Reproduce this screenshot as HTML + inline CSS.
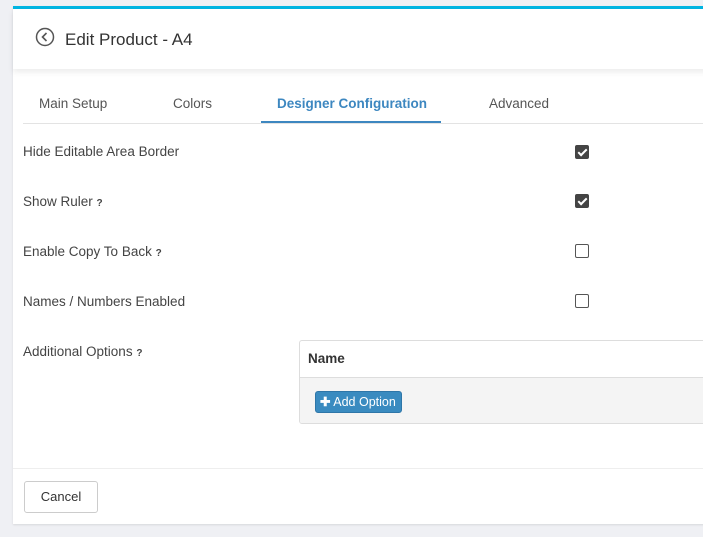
<!DOCTYPE html><html><head><style>
body{margin:0;width:703px;height:537px;background:#eff0f4;font-family:"Liberation Sans",sans-serif;color:#444;position:relative;overflow:hidden}
.panel{position:absolute;left:13px;top:6px;width:700px;height:515px;background:#fff;border-top:3px solid #00b5e2;box-shadow:0 1px 2px rgba(0,0,0,.1)}
.hdr{position:absolute;left:0;top:0;width:700px;height:60px;background:#fff;box-shadow:0 3px 6px rgba(0,0,0,.08)}
.hdr span{position:absolute;left:52px;top:21px;font-size:17px;color:#333}
.tabs{position:absolute;left:10px;top:78px;width:690px;height:36px;border-bottom:1px solid #e3e3e3}
.tab{position:absolute;top:9px;font-size:13.5px;color:#555}
.act{color:#3d87c0;font-weight:bold}
.ul{position:absolute;left:238px;top:34px;width:180px;height:2px;background:#3d87c0}
.lbl{position:absolute;left:10px;font-size:13.5px;color:#444}
.q{font-size:10px;font-weight:bold}
.cb{position:absolute;left:562px;width:12px;height:12px;border:1px solid #555;border-radius:2px;background:#fff}
.cb.on{background:#444;border-color:#444}
.cb.on:after{content:"";position:absolute;left:3.5px;top:0.5px;width:3px;height:7px;border:solid #fff;border-width:0 2px 2px 0;transform:rotate(45deg)}
.tbl{position:absolute;left:286px;top:331px;width:420px;height:82px;border:1px solid #ddd;border-radius:3px;overflow:hidden}
.th{height:37px;border-bottom:1px solid #ddd;font-weight:bold;font-size:13.5px;padding:10px 0 0 8px;box-sizing:border-box;color:#333}
.tb{background:#f4f4f4;height:45px;position:relative}
.btn{position:absolute;left:15px;top:13px;width:87px;height:22px;background:#3a8bc0;border:1px solid #2e76a8;border-radius:3px;color:#fff;font-size:12.5px;line-height:21px;box-sizing:border-box;padding-left:4px}
.foot{position:absolute;left:0;top:459px;width:700px;border-top:1px solid #eee}
.cancel{position:absolute;left:11px;top:472px;width:74px;height:32px;border:1px solid #ccc;border-radius:3px;font-size:13px;line-height:30px;text-align:center;color:#333;box-sizing:border-box}
</style></head><body>
<div class="panel">
<div class="hdr"><svg style="position:absolute;left:22px;top:18px" width="20" height="20" viewBox="0 0 20 20"><circle cx="10" cy="10" r="8.5" fill="none" stroke="#555" stroke-width="1.5"/><path d="M11.5 6 L7.5 10 L11.5 14" fill="none" stroke="#555" stroke-width="1.6"/></svg><span>Edit Product - A4</span></div>
<div class="tabs"><div class="tab" style="left:16px">Main Setup</div><div class="tab" style="left:150px">Colors</div><div class="tab act" style="left:254px">Designer Configuration</div><div class="tab" style="left:466px">Advanced</div><div class="ul"></div></div>
<div class="lbl" style="top:135px">Hide Editable Area Border</div><div class="cb on" style="top:136px"></div>
<div class="lbl" style="top:185px">Show Ruler <span class="q">?</span></div><div class="cb on" style="top:185px"></div>
<div class="lbl" style="top:235px">Enable Copy To Back <span class="q">?</span></div><div class="cb" style="top:235px"></div>
<div class="lbl" style="top:285px">Names / Numbers Enabled</div><div class="cb" style="top:285px"></div>
<div class="lbl" style="top:335px">Additional Options <span class="q">?</span></div>
<div class="tbl"><div class="th">Name</div><div class="tb"><div class="btn"><b>✚</b> Add Option</div></div></div>
<div class="foot"></div>
<div class="cancel">Cancel</div>
</div>
</body></html>
